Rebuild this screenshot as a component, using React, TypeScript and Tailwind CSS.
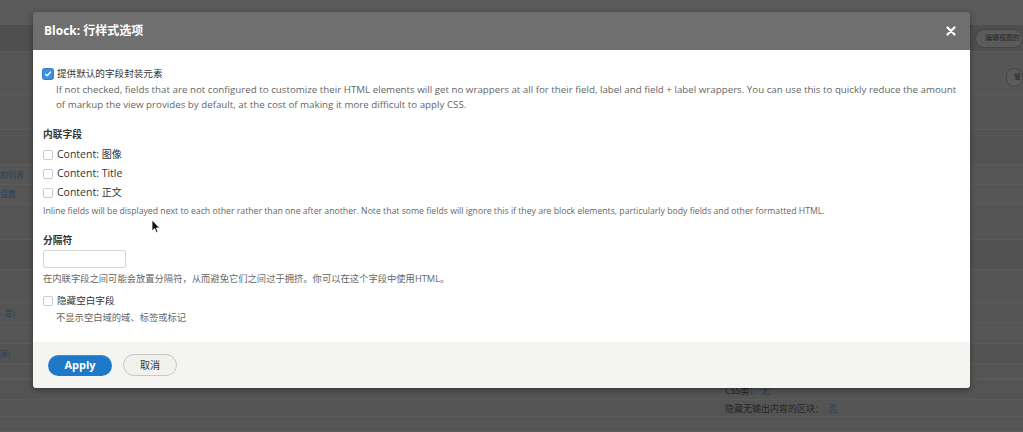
import React from "react"

const font = { fontFamily: '"Open Sans", "Noto Sans CJK SC", sans-serif' }

type BgRow = {
  h: string
  bg: string
  left?: React.ReactNode
  right?: React.ReactNode
}

const bgRows: BgRow[] = [
  { h: "h-[25px]", bg: "bg-[#5a5a5a]" },
  {
    h: "h-[27px]",
    bg: "bg-[#4f4f4f]",
    right: (
      <span className="ml-[975px] mt-[4px] inline-flex h-[19px] w-[60px] items-center whitespace-nowrap rounded-full border border-[#444] bg-[#5b5b5b] pl-[9px] text-[7px] text-[#262626]">
        编辑视图的
      </span>
    ),
  },
  {
    h: "h-[43px]",
    bg: "bg-[#565656]",
    right: (
      <span className="ml-[1006px] mt-[16px] inline-flex h-[19px] w-[30px] items-center whitespace-nowrap rounded-full border border-[#444] bg-[#5b5b5b] pl-[7px] text-[7px] text-[#262626]">
        管
      </span>
    ),
  },
  { h: "h-[35px]", bg: "bg-[#555555]" },
  { h: "h-[35px]", bg: "bg-[#535353]" },
  {
    h: "h-[20px]",
    bg: "bg-[#565656]",
    left: <span className="text-[8px] text-[#27425c]">的列表</span>,
  },
  {
    h: "h-[19px]",
    bg: "bg-[#565656]",
    left: <span className="text-[8px] text-[#27425c]">设置</span>,
  },
  { h: "h-[36px]", bg: "bg-[#555555]" },
  { h: "h-[30px]", bg: "bg-[#525252]" },
  { h: "h-[33px]", bg: "bg-[#555555]" },
  {
    h: "h-[20px]",
    bg: "bg-[#555555]",
    left: <span className="text-[8px] text-[#27425c]">- 是)</span>,
  },
  { h: "h-[21px]", bg: "bg-[#565656]" },
  {
    h: "h-[20px]",
    bg: "bg-[#535353]",
    left: <span className="text-[8px] text-[#27425c]">序)</span>,
  },
  { h: "h-[16px]", bg: "bg-[#555555]" },
  {
    h: "h-[20px]",
    bg: "bg-[#545454]",
    right: (
      <span className="ml-[725px] mt-[4px] text-[9px] text-[#262626]">
        CSS类： <span className="text-[#27425c]">无</span>
      </span>
    ),
  },
  {
    h: "h-[17px]",
    bg: "bg-[#545454]",
    right: (
      <span className="ml-[725px] mt-[2px] text-[9px] text-[#262626]">
        隐藏无输出内容的区块： <span className="ml-[2px] text-[#27425c]">否</span>
      </span>
    ),
  },
  { h: "h-[15px]", bg: "bg-[#555555]" },
]

function Checkbox({ checked = false }: { checked?: boolean }) {
  if (checked) {
    return (
      <span className="flex h-[10px] w-[10px] shrink-0 items-center justify-center rounded-[2px] bg-[#3d8fe3] shadow-[0_0_0_1px_#2f7fd3]">
        <svg width="8" height="8" viewBox="0 0 8 8">
          <path d="M1.5 4.2 L3.2 5.8 L6.5 2" fill="none" stroke="white" strokeWidth="1.3" strokeLinecap="round" strokeLinejoin="round" />
        </svg>
      </span>
    )
  }
  return <span className="h-[10px] w-[10px] shrink-0 rounded-[2px] border border-[#c9c9c9] bg-white" />
}

function CheckRow({ children, checked, className }: { children: React.ReactNode; checked?: boolean; className: string }) {
  return (
    <div className={`flex items-center gap-[4px] ${className}`}>
      <Checkbox checked={checked} />
      <span className="text-[10.5px] text-[#333]">{children}</span>
    </div>
  )
}

function Cursor() {
  return (
    <svg className="absolute left-[151px] top-[219px]" width="10" height="15" viewBox="0 0 10 15">
      <path d="M1 1 L1 12 L3.6 9.6 L5.4 13.6 L7 12.9 L5.3 9 L8.6 9 Z" fill="#111" stroke="white" strokeWidth="0.8" strokeLinejoin="round" />
    </svg>
  )
}

export default function App() {
  return (
    <div className="relative h-[432px] w-[1023px] overflow-hidden bg-[#555555]" style={font}>
      <div className="flex flex-col">
        {bgRows.map((row, i) => (
          <div key={i} className={`relative flex items-center border-b border-[#5b5b5b] ${row.h} ${row.bg}`}>
            {row.left && <div className="absolute left-0 top-0 flex h-full items-center whitespace-nowrap">{row.left}</div>}
            {row.right && <div className="flex h-full w-full items-start whitespace-nowrap">{row.right}</div>}
          </div>
        ))}
      </div>

      <div className="absolute left-[33px] top-[12px] w-[937px] overflow-hidden rounded-[3px] shadow-[0_2px_6px_rgba(0,0,0,0.35)]">
        <div className="flex h-[38px] items-center justify-between bg-[#6f6f6f] pl-[11px] pr-[14px]">
          <span className="text-[12px] font-bold text-white">Block: 行样式选项</span>
          <svg width="10" height="10" viewBox="0 0 10 10">
            <path d="M1.5 1.5 L8.5 8.5 M8.5 1.5 L1.5 8.5" stroke="white" strokeWidth="2.2" strokeLinecap="round" />
          </svg>
        </div>

        <div className="h-[292px] bg-white px-[10px] pt-[16px]">
          <CheckRow className="h-[16px]" checked>
            <span className="text-[9.6px]">提供默认的字段封装元素</span>
          </CheckRow>
          <p className="pl-[13px] text-[9.75px] leading-[15px] text-[#666]">
            If not checked, fields that are not configured to customize their HTML elements will get no wrappers at all for their field, label and field + label wrappers. You can use this to quickly reduce the amount of markup the view provides by default, at the cost of making it more difficult to apply CSS.
          </p>

          <div className="mt-[15px] h-[16px] text-[9.75px] font-bold leading-[16px] text-[#333]">内联字段</div>
          <div className="mt-[2px] flex flex-col">
            <CheckRow className="h-[19px]">
              Content: <span className="text-[10px]">图像</span>
            </CheckRow>
            <CheckRow className="h-[19px]">Content: Title</CheckRow>
            <CheckRow className="h-[19px]">
              Content: <span className="text-[10px]">正文</span>
            </CheckRow>
          </div>
          <p className="mt-[2px] text-[8.7px] leading-[14px] text-[#666]">
            Inline fields will be displayed next to each other rather than one after another. Note that some fields will ignore this if they are block elements, particularly body fields and other formatted HTML.
          </p>

          <div className="mt-[15px] h-[16px] text-[9.75px] font-bold leading-[16px] text-[#333]">分隔符</div>
          <div className="mt-[1px] h-[18px] w-[83px] rounded-[2px] border border-[#d6d6d6] bg-white" />
          <p className="mt-[4px] text-[9.3px] leading-[14px] text-[#666]">
            在内联字段之间可能会放置分隔符，从而避免它们之间过于拥挤。你可以在这个字段中使用HTML。
          </p>

          <CheckRow className="mt-[7px] h-[16px]">
            <span className="text-[9.6px]">隐藏空白字段</span>
          </CheckRow>
          <p className="mt-[2px] pl-[13px] text-[9.3px] leading-[14px] text-[#666]">不显示空白域的域、标签或标记</p>
        </div>

        <div className="flex h-[46px] items-center gap-[11px] bg-[#f4f4f1] pl-[15px]">
          <button className="h-[21px] w-[64px] rounded-full bg-[#1f79c9] text-[11px] font-bold text-white shadow-[inset_0_1px_0_rgba(255,255,255,0.15)]">
            Apply
          </button>
          <button className="h-[22px] w-[54px] rounded-full border border-[#c8c8c4] bg-[#f2f1ec] text-[10px] text-[#333]">
            取消
          </button>
        </div>
      </div>

      <Cursor />
    </div>
  )
}
